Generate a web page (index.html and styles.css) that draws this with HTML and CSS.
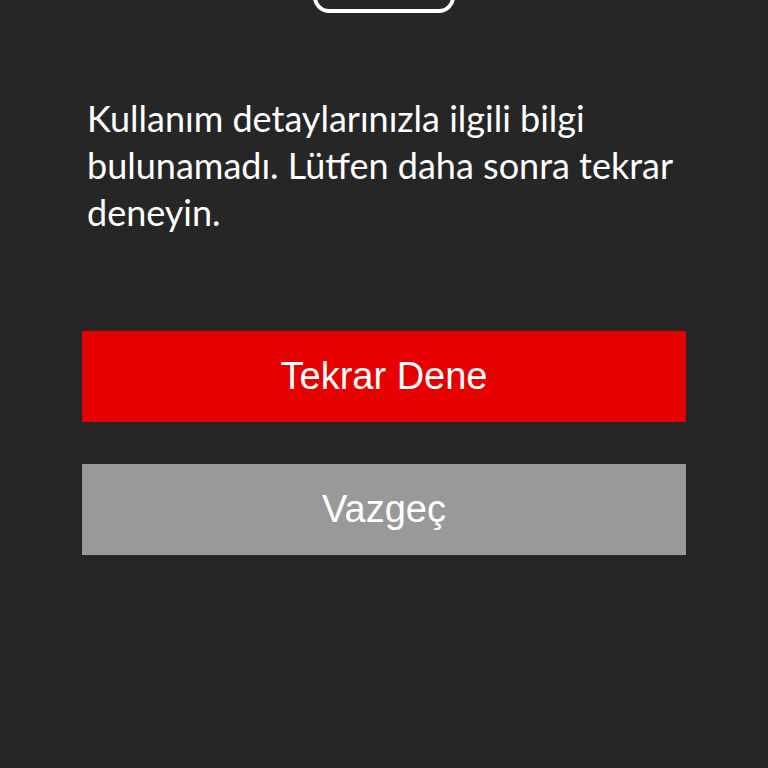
FILE: index.html
```html
<!DOCTYPE html>
<html lang="tr">

<head>
    <meta charset="UTF-8">
    <meta name="viewport" content="width=device-width, initial-scale=1.0">
    <title>Kullanım Detayları</title>
    <link rel="stylesheet" href="styles.css">
</head>

<body>
    <div class="screen">
        <div class="icon-wrap">
            <div class="card-icon"></div>
        </div>

        <p class="message">Kullanım detaylarınızla ilgili bilgi bulunamadı. Lütfen daha sonra tekrar deneyin.</p>

        <div class="actions">
            <button class="btn btn-primary">Tekrar Dene</button>
            <button class="btn btn-secondary">Vazgeç</button>
        </div>
    </div>
</body>

</html>
```

FILE: styles.css
```css
* {
    margin: 0;
    padding: 0;
    box-sizing: border-box;
}

body {
    background-color: #262626;
    font-family: "Lato", "Noto Sans", sans-serif;
    height: 100vh;
    overflow: hidden;
}

.screen {
    width: 604px;
    margin: 0 auto;
    display: flex;
    flex-direction: column;
}

.icon-wrap {
    display: flex;
    justify-content: center;
    height: 13px;
}

/* only the lower edge of the icon is on screen */
.card-icon {
    width: 142px;
    height: 60px;
    margin-top: -47px;
    border: 4px solid #fff;
    border-radius: 16px;
}

.message {
    margin-top: 82px;
    padding: 0 5px;
    color: #fff;
    font-size: 36px;
    line-height: 47px;
}

.actions {
    margin-top: 95px;
    display: flex;
    flex-direction: column;
    gap: 42px;
}

.btn {
    height: 91px;
    width: 100%;
    border: none;
    color: #fff;
    font-family: "Liberation Sans", Arial, sans-serif;
    font-size: 38px;
    cursor: pointer;
}

.btn-primary {
    background-color: #e60000;
}

.btn-secondary {
    background-color: #999999;
}
```
